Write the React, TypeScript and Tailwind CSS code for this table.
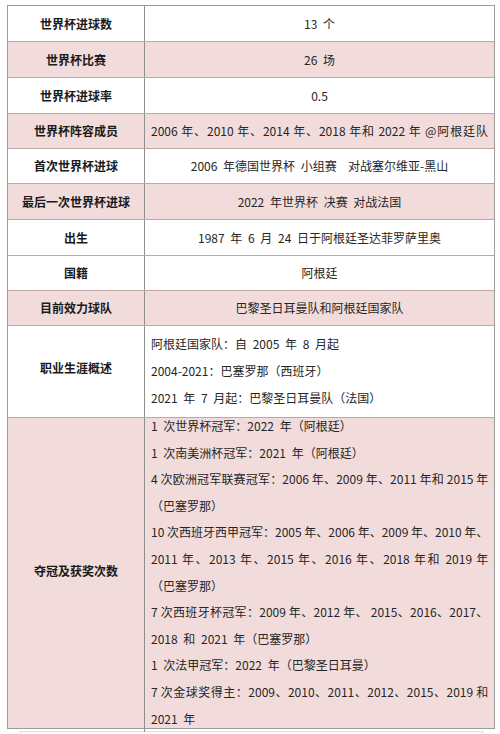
import React from "react";

const H = "border-[#c4a3a5]";

type Row = { label: string; value: string; pink: boolean; h: string; justify?: boolean };

const rows: Row[] = [
  { label: "世界杯进球数", value: "13 个", pink: false, h: "h-[36px]" },
  { label: "世界杯比赛", value: "26 场", pink: true, h: "h-[36px]" },
  { label: "世界杯进球率", value: "0.5", pink: false, h: "h-[36px]" },
  { label: "世界杯阵容成员", value: "2006 年、2010 年、2014 年、2018 年和 2022 年 @阿根廷队", pink: true, h: "h-[35px]", justify: true },
  { label: "首次世界杯进球", value: "2006 年德国世界杯 小组赛  对战塞尔维亚-黑山", pink: false, h: "h-[35px]" },
  { label: "最后一次世界杯进球", value: "2022 年世界杯 决赛 对战法国", pink: true, h: "h-[36px]" },
  { label: "出生", value: "1987 年 6 月 24 日于阿根廷圣达菲罗萨里奥", pink: false, h: "h-[36px]" },
  { label: "国籍", value: "阿根廷", pink: false, h: "h-[35px]" },
  { label: "目前效力球队", value: "巴黎圣日耳曼队和阿根廷国家队", pink: true, h: "h-[35px]" },
];

const career = [
  "阿根廷国家队：自 2005 年 8 月起",
  "2004-2021：巴塞罗那（西班牙）",
  "2021 年 7 月起：巴黎圣日耳曼队（法国）",
];

const honours: { t: string; j?: boolean }[] = [
  { t: "1 次世界杯冠军：2022 年（阿根廷）" },
  { t: "1 次南美洲杯冠军：2021 年（阿根廷）" },
  { t: "4 次欧洲冠军联赛冠军：2006 年、2009 年、2011 年和 2015 年", j: true },
  { t: "（巴塞罗那）" },
  { t: "10 次西班牙西甲冠军：2005 年、2006 年、2009 年、2010 年、", j: true },
  { t: "2011 年、2013 年、2015 年、2016 年、2018 年和 2019 年", j: true },
  { t: "（巴塞罗那）" },
  { t: "7 次西班牙杯冠军：2009 年、2012 年、 2015、2016、2017、", j: true },
  { t: "2018 和 2021 年（巴塞罗那）" },
  { t: "1 次法甲冠军：2022 年（巴黎圣日耳曼）" },
  { t: "7 次金球奖得主：2009、2010、2011、2012、2015、2019 和", j: true },
  { t: "2021 年" },
];

export default function App() {
  return (
    <div className="w-[500px] h-[734px] bg-white overflow-hidden font-['Noto_Sans_CJK_SC','Microsoft_YaHei',sans-serif] text-[12px]">
      <div className="mt-[5px] ml-[7px] w-[488px] border border-[#9c9c9c]">
        {rows.map((r, i) => (
          <div
            key={i}
            className={`grid grid-cols-[137px_1fr] border-b ${H} ${r.h} ${r.pink ? "bg-[#f2dcdb]" : "bg-white"}`}
          >
            <div className="flex items-center justify-center border-r border-[#8f8f8f] font-bold text-[#1a1a1a]">
              {r.label}
            </div>
            <div
              className={`flex items-center px-[6px] text-[#262626] whitespace-pre ${
                r.justify ? "" : "justify-center [word-spacing:3px]"
              }`}
            >
              {r.justify ? (
                <div className="w-full text-justify [text-align-last:justify]">{r.value}</div>
              ) : (
                r.value
              )}
            </div>
          </div>
        ))}
        <div className={`grid grid-cols-[137px_1fr] border-b ${H} h-[92px] bg-white`}>
          <div className="flex items-center justify-center border-r border-[#8f8f8f] font-bold text-[#1a1a1a] pb-[8px]">
            职业生涯概述
          </div>
          <div className="px-[6px] pt-[4px] text-[#262626] leading-[27px] whitespace-pre [word-spacing:3px]">
            {career.map((c, i) => (
              <div key={i}>{c}</div>
            ))}
          </div>
        </div>
        <div className="grid grid-cols-[137px_1fr] h-[310px] bg-[#f2dcdb]">
          <div className="flex items-center justify-center border-r border-[#8f8f8f] font-bold text-[#1a1a1a] pb-[8px]">
            夺冠及获奖次数
          </div>
          <div className="px-[6px] text-[#262626] leading-[26.6px] whitespace-pre">
            <div className="-mt-[5px]">
              {honours.map((h, i) => (
                <div
                  key={i}
                  className={h.j ? "text-justify [text-align-last:justify]" : "[word-spacing:3px]"}
                >
                  {h.t}
                </div>
              ))}
            </div>
          </div>
        </div>
      </div>
      <div className="mt-[2px] ml-[20px] w-[463px] h-[4px] border-t border-x border-[#e2e2e2]" />
    </div>
  );
}
